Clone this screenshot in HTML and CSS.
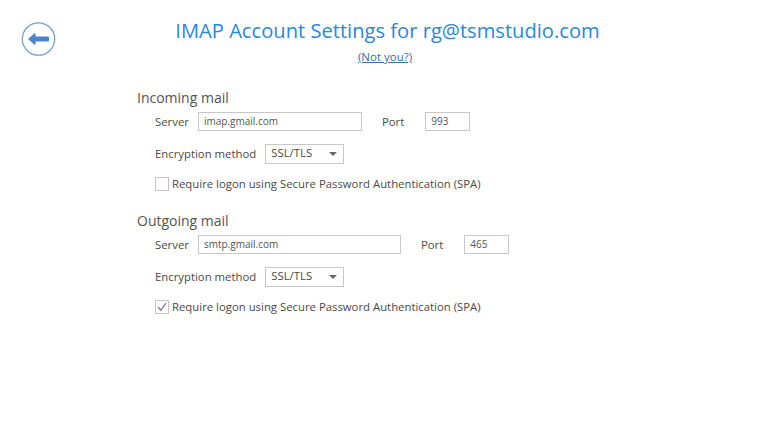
FILE: index.html
```html
<!DOCTYPE html>
<html>
<head>
    <title>IMAP Account Settings</title>
    <link rel="stylesheet" href="styles.css">
</head>
<body>
    <div class="page">
        <a class="back" href="#">
            <svg width="36" height="36" viewBox="0 0 36 36">
                <circle cx="17.5" cy="17" r="16.2" fill="none" stroke="#6fa3d6" stroke-width="1.3"/>
                <path d="M7.5 17 L14 11.5 L14 15 L27.5 15 L27.5 19 L14 19 L14 22.5 Z" fill="#4a86c5" stroke="#4a86c5" stroke-width="1" stroke-linejoin="round"/>
            </svg>
        </a>

        <div class="header">
            <h1>IMAP Account Settings for rg@tsmstudio.com</h1>
            <a class="not-you" href="#">(Not you?)</a>
        </div>

        <div class="section">
            <h2>Incoming mail</h2>
            <div class="row server-row">
                <label>Server</label>
                <div class="input server-in">imap.gmail.com</div>
                <label class="port-label">Port</label>
                <div class="input port">993</div>
            </div>
            <div class="row enc-row">
                <label>Encryption method</label>
                <div class="select">SSL/TLS<span class="caret"></span></div>
            </div>
            <div class="row check-row">
                <span class="check"></span>
                <label>Require logon using Secure Password Authentication (SPA)</label>
            </div>
        </div>

        <div class="section">
            <h2>Outgoing mail</h2>
            <div class="row server-row">
                <label>Server</label>
                <div class="input server-out">smtp.gmail.com</div>
                <label class="port-label">Port</label>
                <div class="input port">465</div>
            </div>
            <div class="row enc-row">
                <label>Encryption method</label>
                <div class="select">SSL/TLS<span class="caret"></span></div>
            </div>
            <div class="row check-row">
                <span class="check">
                    <svg width="12" height="12" viewBox="0 0 12 12">
                        <path d="M2 6 L4.8 9.2 L10 2" fill="none" stroke="#777" stroke-width="1.2"/>
                    </svg>
                </span>
                <label>Require logon using Secure Password Authentication (SPA)</label>
            </div>
        </div>
    </div>
</body>
</html>
```

FILE: styles.css
```css
html, body {
    margin: 0;
    background: white;
}
body {
    font-family: "Open Sans", "Noto Sans", sans-serif;
    color: #4a4a4a;
    overflow: hidden;
}
.page {
    position: relative;
    height: 444px;
    padding-top: 17px;
    box-sizing: border-box;
}
.back {
    position: absolute;
    left: 21px;
    top: 22px;
    line-height: 0;
}
.header {
    text-align: center;
    height: 71px;
    padding-left: 8px;
}
h1 {
    margin: 0;
    font-size: 20.15px;
    font-weight: 400;
    line-height: 27px;
    color: #2b88d8;
}
.not-you {
    display: block;
    margin-top: 5px;
    padding-right: 5px;
    font-size: 11.5px;
    line-height: 16px;
    color: #3c6ea8;
}
.section {
    margin-left: 137px;
    height: 123px;
}
h2 {
    margin: 0;
    font-size: 14px;
    font-weight: 400;
    line-height: 20px;
    color: #555;
}
.row {
    display: flex;
    align-items: center;
    font-size: 11.35px;
    margin-left: 18px;
}
.server-row {
    margin-top: 4px;
    height: 19px;
}
.enc-row {
    margin-top: 13px;
    height: 20px;
}
.check-row {
    margin-top: 13px;
    height: 14px;
}
.enc-row label, .check-row label {
    margin-bottom: 2px;
}
.input {
    height: 17px;
    line-height: 17px;
    border: 1px solid #c8c8c8;
    padding-left: 5px;
    font-size: 10px;
    color: #555;
}
.server-in {
    width: 157px;
    margin-left: 9px;
}
.server-out {
    width: 196px;
    margin-left: 9px;
}
.port-label {
    margin-left: 20px;
}
.port {
    width: 38px;
    margin-left: 21px;
}
.select {
    position: relative;
    width: 72px;
    height: 18px;
    line-height: 16px;
    margin-left: 9px;
    border: 1px solid #c8c8c8;
    padding-left: 5px;
    font-size: 11.35px;
}
.caret {
    position: absolute;
    right: 6px;
    top: 7px;
    border-left: 4px solid transparent;
    border-right: 4px solid transparent;
    border-top: 4px solid #666;
}
.check {
    width: 12px;
    height: 12px;
    border: 1px solid #c4c4c4;
    margin-right: 3px;
    line-height: 0;
}
```
